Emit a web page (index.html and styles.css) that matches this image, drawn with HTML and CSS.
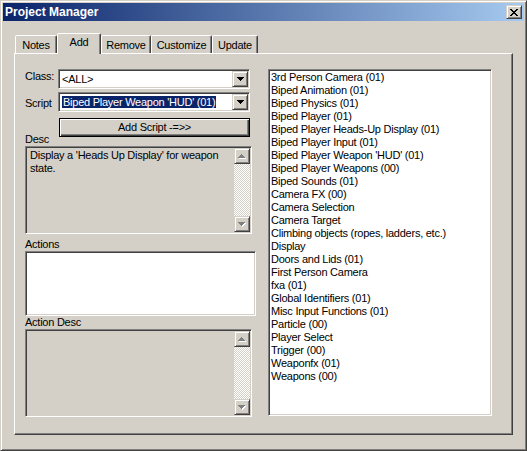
FILE: index.html
```html
<!DOCTYPE html>
<html lang="en">
<head>
<meta charset="utf-8">
<title>Project Manager</title>
<link rel="stylesheet" href="styles.css">
</head>
<body>
<div class="window">
  <div class="titlebar">
    <span class="title">Project Manager</span>
    <button class="caption-btn raised" aria-label="Close">
      <svg width="8" height="7" viewBox="0 0 8 7"><path d="M0 0h2v1H0zM6 0h2v1H6zM1 1h2v1H1zM5 1h2v1H5zM2 2h4v1H2zM3 3h2v1H3zM2 4h4v1H2zM1 5h2v1H1zM5 5h2v1H5zM0 6h2v1H0zM6 6h2v1H6z"/></svg>
    </button>
  </div>

  <div class="dialog">
    <div class="tabs">
      <div class="tab tab-notes">Notes</div>
      <div class="tab tab-add active">Add</div>
      <div class="tab tab-remove">Remove</div>
      <div class="tab tab-customize">Customize</div>
      <div class="tab tab-update">Update</div>
    </div>

    <div class="panel">
      <div class="left">
        <div class="field">
          <span class="field-label label-class">Class:</span>
          <div class="combo sunken">
            <span class="combo-text">&lt;ALL&gt;</span>
            <span class="drop raised"><svg width="7" height="4" viewBox="0 0 7 4"><path d="M0 0h7v1H0zM1 1h5v1H1zM2 2h3v1H2zM3 3h1v1H3z"/></svg></span>
          </div>
        </div>
        <div class="field">
          <span class="field-label label-script">Script</span>
          <div class="combo sunken">
            <span class="combo-text"><span class="selected">Biped Player Weapon 'HUD' (01)</span></span>
            <span class="drop raised"><svg width="7" height="4" viewBox="0 0 7 4"><path d="M0 0h7v1H0zM1 1h5v1H1zM2 2h3v1H2zM3 3h1v1H3z"/></svg></span>
          </div>
        </div>
        <div class="button-row">
          <span class="row-label">Desc</span>
          <button class="btn-default">Add Script -=&gt;&gt;</button>
        </div>

        <div class="memo sunken">
          <div class="memo-text">Display a 'Heads Up Display' for weapon state.</div>
          <div class="vscroll">
            <span class="sb-btn raised"><svg width="8" height="5" viewBox="0 0 8 5"><path fill="#fff" d="M4 1h1v1H4zM3 2h3v1H3zM2 3h5v1H2zM1 4h7v1H1z"/><path fill="#808080" d="M3 0h1v1H3zM2 1h3v1H2zM1 2h5v1H1zM0 3h7v1H0z"/></svg></span>
            <span class="sb-track"></span>
            <span class="sb-btn raised"><svg width="8" height="5" viewBox="0 0 8 5"><path fill="#fff" d="M1 1h7v1H1zM2 2h5v1H2zM3 3h3v1H3zM4 4h1v1H4z"/><path fill="#808080" d="M0 0h7v1H0zM1 1h5v1H1zM2 2h3v1H2zM3 3h1v1H3z"/></svg></span>
          </div>
        </div>

        <div class="section-label label-actions">Actions</div>
        <div class="actions sunken"></div>

        <div class="section-label">Action Desc</div>
        <div class="memo sunken">
          <div class="memo-text"></div>
          <div class="vscroll">
            <span class="sb-btn raised"><svg width="8" height="5" viewBox="0 0 8 5"><path fill="#fff" d="M4 1h1v1H4zM3 2h3v1H3zM2 3h5v1H2zM1 4h7v1H1z"/><path fill="#808080" d="M3 0h1v1H3zM2 1h3v1H2zM1 2h5v1H1zM0 3h7v1H0z"/></svg></span>
            <span class="sb-track"></span>
            <span class="sb-btn raised"><svg width="8" height="5" viewBox="0 0 8 5"><path fill="#fff" d="M1 1h7v1H1zM2 2h5v1H2zM3 3h3v1H3zM4 4h1v1H4z"/><path fill="#808080" d="M0 0h7v1H0zM1 1h5v1H1zM2 2h3v1H2zM3 3h1v1H3z"/></svg></span>
          </div>
        </div>
      </div>

      <ul class="scripts sunken">
        <li>3rd Person Camera (01)</li>
        <li>Biped Animation (01)</li>
        <li>Biped Physics (01)</li>
        <li>Biped Player (01)</li>
        <li>Biped Player Heads-Up Display (01)</li>
        <li>Biped Player Input (01)</li>
        <li>Biped Player Weapon 'HUD' (01)</li>
        <li>Biped Player Weapons (00)</li>
        <li>Biped Sounds (01)</li>
        <li>Camera FX (00)</li>
        <li>Camera Selection</li>
        <li>Camera Target</li>
        <li>Climbing objects (ropes, ladders, etc.)</li>
        <li>Display</li>
        <li>Doors and Lids (01)</li>
        <li>First Person Camera</li>
        <li>fxa (01)</li>
        <li>Global Identifiers (01)</li>
        <li>Misc Input Functions (01)</li>
        <li>Particle (00)</li>
        <li>Player Select</li>
        <li>Trigger (00)</li>
        <li>Weaponfx (01)</li>
        <li>Weapons (00)</li>
      </ul>
    </div>
  </div>
</div>
</body>
</html>
```

FILE: styles.css
```css
* {
  box-sizing: border-box;
}

body {
  margin: 0;
  background: #d4d0c8;
  color: #000;
  font-family: "Liberation Sans", Arial, sans-serif;
  font-size: 11px;
  letter-spacing: -0.25px;
  line-height: 13px;
}

button {
  font: inherit;
  letter-spacing: inherit;
  color: inherit;
  margin: 0;
  padding: 0;
}

/* classic 3D edges */
.raised {
  background: #d4d0c8;
  border: 1px solid;
  border-color: #d4d0c8 #404040 #404040 #d4d0c8;
  box-shadow: inset 1px 1px #fff, inset -1px -1px #808080;
}

.sunken {
  border: 1px solid;
  border-color: #808080 #fff #fff #808080;
  box-shadow: inset 1px 1px #404040, inset -1px -1px #d4d0c8;
  padding: 1px;
}

/* window frame */
.window {
  width: 527px;
  height: 451px;
  background: #d4d0c8;
  border: 1px solid;
  border-color: #d4d0c8 #404040 #404040 #d4d0c8;
  box-shadow: inset 1px 1px #fff, inset -1px -1px #808080;
  padding: 2px;
  display: flex;
  flex-direction: column;
}

.titlebar {
  height: 18px;
  flex: none;
  display: flex;
  align-items: center;
  justify-content: space-between;
  padding: 0 2px;
  background: linear-gradient(to right, #0a246a, #a6caf0);
}

.title {
  color: #fff;
  font-weight: bold;
  font-size: 12px;
  letter-spacing: 0;
}

.caption-btn {
  width: 16px;
  height: 14px;
  display: flex;
  align-items: center;
  justify-content: center;
}

.caption-btn svg {
  display: block;
}

/* dialog body */
.dialog {
  flex: 1;
  padding: 12px 11px 0;
}

.tabs {
  display: flex;
  align-items: flex-end;
  height: 20px;
  padding-left: 1px;
}

.tab {
  height: 18px;
  padding-top: 3px;
  text-align: center;
  white-space: nowrap;
  border: 1px solid;
  border-bottom: 0;
  border-color: #fff #404040 transparent #fff;
  border-radius: 2px 2px 0 0;
  box-shadow: inset -1px 0 #808080;
  background: #d4d0c8;
}

.tab.active {
  height: 21px;
  margin-bottom: -1px;
  padding-top: 2px;
  position: relative;
  z-index: 1;
}

.tab-notes { width: 42px; }
.tab-add { width: 44px; }
.tab-remove { width: 50px; }
.tab-customize { width: 61px; }
.tab-update { width: 46px; }

.panel {
  height: 382px;
  border: 1px solid;
  border-color: #fff #404040 #404040 #fff;
  box-shadow: inset -1px -1px #808080;
  padding: 15px 0 0 10px;
  display: grid;
  grid-template-columns: 232px 224px;
  column-gap: 11px;
  align-items: start;
}

/* left column */
.left {
  display: flex;
  flex-direction: column;
}

.field {
  display: flex;
  height: 20px;
}

.field + .field {
  margin-top: 3px;
}

.field-label {
  width: 33px;
}

.label-class { padding-top: 1px; }
.label-script { padding-top: 5px; }

.combo {
  width: 192px;
  height: 20px;
  background: #fff;
  display: flex;
}

.combo-text {
  flex: 1;
  line-height: 16px;
  padding-left: 2px;
  white-space: nowrap;
  overflow: hidden;
}

.selected {
  background: #0a246a;
  color: #fff;
  padding: 0 1px 0 1px;
}

.drop {
  width: 16px;
  height: 16px;
  display: flex;
  align-items: center;
  justify-content: center;
}

.drop svg,
.sb-btn svg {
  display: block;
}

.button-row {
  display: flex;
  height: 28px;
  margin-top: 6px;
}

.row-label {
  width: 34px;
  align-self: flex-end;
}

.btn-default {
  width: 191px;
  height: 19px;
  background: #d4d0c8;
  border: 1px solid #000;
  box-shadow: inset 1px 1px #fff, inset -1px -1px #404040, inset -2px -2px #808080;
  text-align: center;
}

.memo {
  width: 227px;
  height: 88px;
  display: flex;
  background: #d4d0c8;
}

.memo-text {
  flex: 1;
  padding: 1px 3px;
}

.vscroll {
  width: 16px;
  flex: none;
  display: flex;
  flex-direction: column;
}

.sb-btn {
  height: 16px;
  display: flex;
  align-items: center;
  justify-content: center;
}

.sb-track {
  flex: 1;
  background-image: conic-gradient(#fff 25%, #d4d0c8 0 50%, #fff 0 75%, #d4d0c8 0);
  background-size: 2px 2px;
}

.section-label {
  height: 13px;
}

.label-actions {
  margin-top: 4px;
}

.actions {
  width: 231px;
  height: 65px;
  background: #fff;
}

/* script list */
.scripts {
  list-style: none;
  margin: 0;
  height: 347px;
  background: #fff;
}

.scripts li {
  padding-left: 1px;
  white-space: nowrap;
}
```
